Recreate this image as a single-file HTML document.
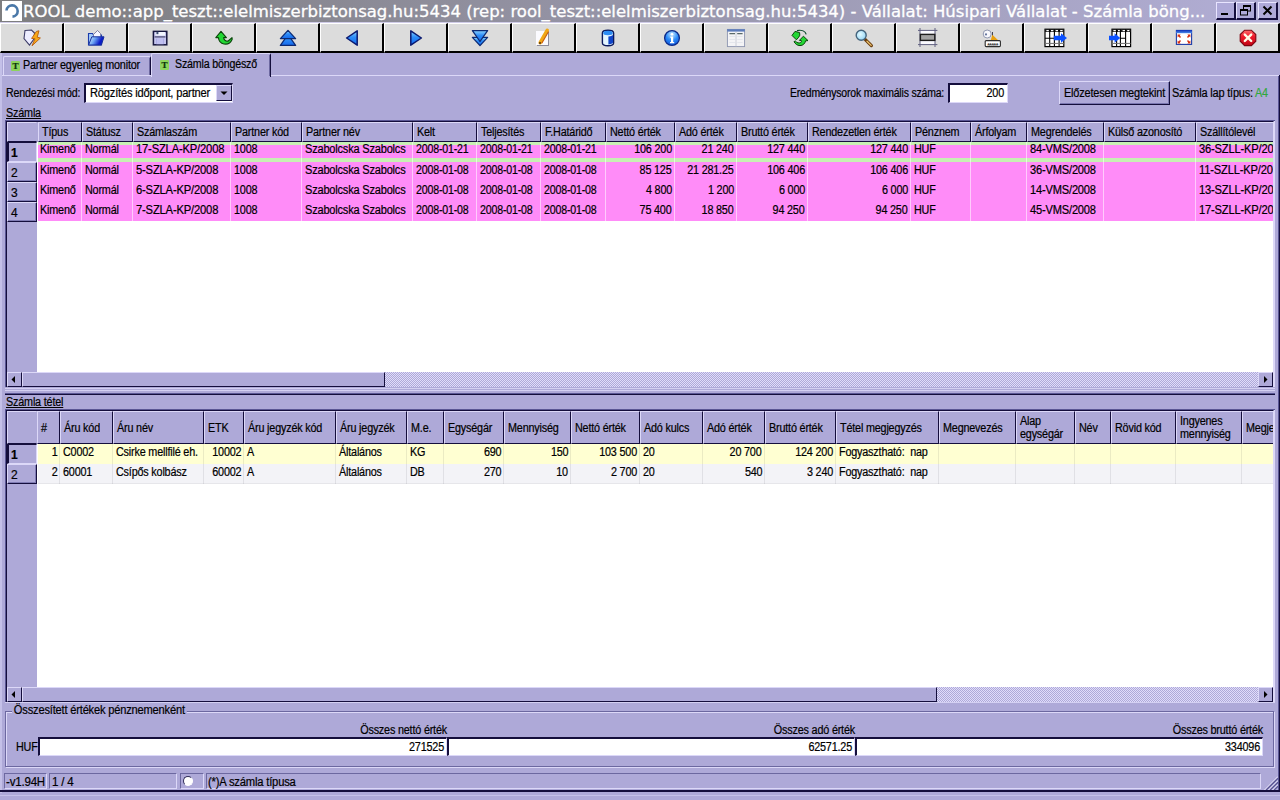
<!DOCTYPE html>
<html lang="hu"><head><meta charset="utf-8"><title>ROOL demo</title>
<style>
html,body{margin:0;padding:0}
body{width:1280px;height:800px;overflow:hidden;position:relative;background:#aea9d8;font:12px "Liberation Sans",sans-serif;color:#000;letter-spacing:-0.2px;-webkit-text-stroke:0.2px #000}
div,span{box-sizing:border-box}
.a{position:absolute}
.t{position:absolute;white-space:nowrap;line-height:13px;height:13px;transform:scaleX(.9);transform-origin:0 0}
.t.r{text-align:right;transform-origin:100% 0}
.x{display:inline-block;transform:scaleX(.9);transform-origin:0 0}
.ra .x{transform-origin:100% 0}
#cap{left:0;top:0;width:1280px;height:22px;background:linear-gradient(90deg,#7e7e80 0%,#84848a 15%,#b2aed6 100%)}
#ttl{-webkit-text-stroke:0.3px #fff;left:23px;top:1px;height:22px;letter-spacing:0;color:#fff;font:16.5px/22px "DejaVu Sans","Liberation Sans",sans-serif;white-space:nowrap;transform:scaleX(.9987);transform-origin:0 50%}
.cb{top:2px;width:20px;height:18px;background:#aea9d8;border-top:1px solid #e8e4ff;border-left:1px solid #e8e4ff;border-right:2px solid #140e3c;border-bottom:2px solid #140e3c}
.tb{top:23px;width:64px;height:30px;background:#dcdcdc;border-top:1px solid #fff;border-left:1px solid #fff;border-right:2px solid #000;border-bottom:2px solid #000}
.tb svg{position:absolute;left:21px;top:4px;width:20px;height:20px;overflow:visible}
.hc{position:absolute;background:#aea9d8;border-top:1px solid #dcd8f8;border-left:1px solid #dcd8f8;border-right:1px solid #140e3c;border-bottom:1px solid #140e3c}
.hc span{position:absolute;left:3px;white-space:nowrap;line-height:13px;transform:scaleX(.9);transform-origin:0 0}
.rh{position:absolute;left:7px;width:30px;height:20px;background:#aea9d8;border-top:1px solid #dcd8f8;border-left:1px solid #dcd8f8;border-right:1px solid #140e3c;border-bottom:1px solid #140e3c;box-shadow:inset -1px -1px 0 #807cb4}
.rh span{position:absolute;left:3px;top:4px;line-height:13px;font-size:12px}
.c{z-index:2;position:absolute;height:20px;white-space:nowrap;overflow:hidden;line-height:13px;padding:2px 2px 0 3px;border-right:1px solid rgba(255,255,255,.55)}
.sunk{border-top:2px solid #140e3c;border-left:2px solid #140e3c;border-right:1px solid #dcd8f8;border-bottom:1px solid #dcd8f8;background:#fff}
.sb{position:absolute;height:15px;background:#aea9d8}
.sbtn{position:absolute;top:0;width:15px;height:15px;background:#aea9d8;border-top:1px solid #dcd8f8;border-left:1px solid #dcd8f8;border-right:1px solid #140e3c;border-bottom:1px solid #140e3c}
.trk{position:absolute;top:0;height:15px;background:conic-gradient(#e0dcfa 25%,#aea9d8 0 50%,#e0dcfa 0 75%,#aea9d8 0) 0 0/2px 2px}
.sp{position:absolute;top:773px;height:16px;border-top:1px solid #6c68a0;border-left:1px solid #6c68a0;border-right:1px solid #dcd8f8;border-bottom:1px solid #dcd8f8}
</style></head><body>

<svg width="0" height="0" style="position:absolute"><defs>
<linearGradient id="gblue" x1="0" y1="0" x2="0" y2="1"><stop offset="0" stop-color="#8cd4ff"/><stop offset="0.45" stop-color="#2c8cf8"/><stop offset="1" stop-color="#1468ec"/></linearGradient>
<linearGradient id="gfold" x1="0" y1="0" x2="1" y2="0.3"><stop offset="0" stop-color="#e4f6ff"/><stop offset="0.45" stop-color="#6ca4f4"/><stop offset="0.85" stop-color="#0c1cc8"/></linearGradient>
<radialGradient id="ginfo" cx="0.5" cy="0.25" r="0.8"><stop offset="0" stop-color="#c4e8ff"/><stop offset="0.5" stop-color="#2c8cf8"/><stop offset="1" stop-color="#0c50d8"/></radialGradient>
<radialGradient id="glens" cx="0.4" cy="0.4" r="0.7"><stop offset="0" stop-color="#e4fbff"/><stop offset="1" stop-color="#8cd0f4"/></radialGradient>
<linearGradient id="gwin" x1="0" y1="0" x2="0" y2="1"><stop offset="0" stop-color="#0c2cb4"/><stop offset="1" stop-color="#4c8cec"/></linearGradient>
<linearGradient id="gred" x1="0" y1="0" x2="0" y2="1"><stop offset="0" stop-color="#ff6c6c"/><stop offset="0.4" stop-color="#f01c2c"/><stop offset="1" stop-color="#c00414"/></linearGradient>
</defs></svg>
<div class="a" id="cap"></div>
<div class="a" style="left:2px;top:1px;width:20px;height:20px;background:#fff"><svg width="20" height="20" viewBox="0 0 20 20"><path d="M4.5 9.5 A5.6 5.6 0 1 1 10.5 15.6" fill="none" stroke="#4a78a8" stroke-width="2.6"/></svg></div>
<div class="a" id="ttl">ROOL demo::app_teszt::elelmiszerbiztonsag.hu:5434 (rep: rool_teszt::elelmiszerbiztonsag.hu:5434) - Vállalat: Húsipari Vállalat - Számla böng...</div>
<div class="a cb" style="left:1216px"><svg class="a" style="left:0;top:0" width="17" height="15"><rect x="4" y="10" width="7" height="2" fill="#000"/></svg></div>
<div class="a cb" style="left:1236px"><svg class="a" style="left:0;top:0" width="17" height="15"><rect x="6.5" y="3" width="7" height="5" fill="none" stroke="#000"/><rect x="6" y="2" width="8" height="2" fill="#000"/><rect x="3.5" y="7" width="7" height="5" fill="#aea9d8" stroke="#000"/><rect x="3" y="6" width="8" height="2" fill="#000"/></svg></div>
<div class="a cb" style="left:1258px"><svg class="a" style="left:0;top:0" width="17" height="15"><path d="M4.5 3.5 L12.5 11.5 M12.5 3.5 L4.5 11.5" stroke="#000" stroke-width="2" fill="none"/></svg></div>
<div class="a" style="left:0;top:22px;width:1280px;height:1px;background:#d0cce8"></div>
<div class="a tb" style="left:0px"><svg viewBox="-10 -10 20 20"><polygon points="-7,-7.5 -0.5,-8 2.5,-5 2,1 -2.5,7 -8,0.5" fill="#ececff" stroke="#3c3c68" stroke-width="1.1"/><polygon points="7,-7.2 4.4,-6.6 -0.4,0.4 3,0.8 0,7.8 8.4,0 5.2,-0.8" fill="#f8a818" stroke="#b85c0c" stroke-width="0.9" stroke-linejoin="round"/></svg></div>
<div class="a tb" style="left:64px"><svg viewBox="-10 -10 20 20"><polygon points="-7.5,-4.5 -3.5,-4.5 -2.5,-3 5.5,-3 5.5,7 -7.5,7" fill="#a4ccfa" stroke="#1c3cac" stroke-width="1.1"/><polygon points="-2.5,-3.5 1.5,-7.5 4.5,-4.5 4.8,0 -2.5,0" fill="#f6f6ff" stroke="#5a5a88" stroke-width="0.7"/><polygon points="-7.4,7 -4.2,-1.2 8,-1.2 5.4,7" fill="url(#gfold)" stroke="#16309c" stroke-width="1"/></svg></div>
<div class="a tb" style="left:128px"><svg viewBox="-10 -10 20 20"><rect x="-6.6" y="-6.6" width="13.4" height="13.4" fill="#c4c4ee" stroke="#16163e" stroke-width="1.5"/><rect x="-4.5" y="-6" width="9.5" height="3.6" fill="#f2f6ff"/><rect x="-3.6" y="-6.2" width="2" height="2.4" fill="#3c4c74"/><rect x="-5.5" y="-1.8" width="11" height="1.4" fill="#585880"/><rect x="-4" y="0.6" width="8" height="5.6" fill="#aeaee6"/><path d="M-2,0.6V6.2M0,0.6V6.2M2,0.6V6.2" stroke="#d8d8ff" stroke-width="0.8"/></svg></div>
<div class="a tb" style="left:192px"><svg viewBox="-10 -10 20 20"><path d="M-3,-6.6 L2.4,-0.4 L-0.4,-0.4 C0,2.2 2,3.6 4.2,3 L8,-0.4 L8.2,1.2 C6.6,5 3.4,6.6 0,6 C-3.2,5.4 -5.2,3 -5.6,-0.4 L-8.2,-0.4 Z" fill="#22d834" stroke="#0a460a" stroke-width="1.1" stroke-linejoin="round"/></svg></div>
<div class="a tb" style="left:256px"><svg viewBox="-10 -10 20 20"><polygon points="0,-3.5 7.6,7.4 -7.6,7.4" fill="url(#gblue)" stroke="#0c2a74" stroke-width="1.3" stroke-linejoin="round"/><polygon points="0,-7.6 7.6,0.6 -7.6,0.6" fill="url(#gblue)" stroke="#0c2a74" stroke-width="1.3" stroke-linejoin="round"/></svg></div>
<div class="a tb" style="left:320px"><svg viewBox="-10 -10 20 20"><polygon points="-5.4,0 5.2,-7.2 5.2,7.2" fill="url(#gblue)" stroke="#0c1a70" stroke-width="1.5" stroke-linejoin="round"/></svg></div>
<div class="a tb" style="left:384px"><svg viewBox="-10 -10 20 20"><polygon points="5.4,0 -5.2,-7.2 -5.2,7.2" fill="url(#gblue)" stroke="#0c1a70" stroke-width="1.5" stroke-linejoin="round"/></svg></div>
<div class="a tb" style="left:448px"><svg viewBox="-10 -10 20 20"><polygon points="0,7.6 7.6,-0.6 -7.6,-0.6" fill="url(#gblue)" stroke="#0c2a74" stroke-width="1.3" stroke-linejoin="round"/><polygon points="0,3.5 7.6,-7.4 -7.6,-7.4" fill="url(#gblue)" stroke="#0c2a74" stroke-width="1.3" stroke-linejoin="round"/></svg></div>
<div class="a tb" style="left:512px"><svg viewBox="-10 -10 20 20"><rect x="-7" y="-6" width="12" height="14" fill="#8c8c9c"/><rect x="-8" y="-7" width="12" height="14" fill="#fbfbff"/><path d="M-3.8,4.6 L3.2,-7.6" stroke="#f0a818" stroke-width="3.6" stroke-linecap="round"/><path d="M-2.2,5.2 L4.6,-6.6" stroke="#c85c10" stroke-width="1.1"/><circle cx="-4" cy="5" r="1.1" fill="#5a3a10"/></svg></div>
<div class="a tb" style="left:576px"><svg viewBox="-10 -10 20 20"><path d="M-5.6,-5 C-5.6,-8.6 5.6,-8.6 5.6,-5 V5 C5.6,8.6 -5.6,8.6 -5.6,5 Z" fill="#e4f6ff" stroke="#0c1a5c" stroke-width="1.4"/><path d="M0.4,-1.6 C3,-1.8 5,-2.6 5,-3.6 V4.6 C5,5.8 2.6,6.4 0.4,6.4 Z" fill="#1044c8"/><ellipse cx="0" cy="-5" rx="4.8" ry="2.2" fill="#2c8cf4"/></svg></div>
<div class="a tb" style="left:640px"><svg viewBox="-10 -10 20 20"><circle cx="0" cy="0" r="7.4" fill="url(#ginfo)" stroke="#0c2a88" stroke-width="1.3"/><circle cx="0" cy="-3.8" r="1.3" fill="#fff"/><path d="M-1.8,-1.4 H1.2 V4 H2.2 V5.2 H-2 V4 H-1 V-0.2 H-1.8 Z" fill="#fff"/></svg></div>
<div class="a tb" style="left:704px"><svg viewBox="-10 -10 20 20"><rect x="-8.6" y="-8.6" width="17.2" height="17.2" fill="#f4f4f6" stroke="#8c94b0" stroke-width="0.9"/><rect x="-8.8" y="-8.8" width="17.6" height="2.4" fill="#5c7cbc"/><path d="M0,-6 V8.4" stroke="#c0c4d0" stroke-width="0.8"/><path d="M-6.6,-4.4 H-1 M1.2,-4.4 H6.6" stroke="#5a6a6a" stroke-width="1.1"/><path d="M-6.6,-1.5 H-1 M1.2,-1.5 H6.6 M-6.6,1.5 H-1 M1.2,1.5 H6.6 M-6.6,4.5 H-1 M1.2,4.5 H6.6" stroke="#e0e2ea" stroke-width="0.8"/></svg></div>
<div class="a tb" style="left:768px"><svg viewBox="-10 -10 20 20"><path d="M-3,-7.4 C2,-8.4 5.4,-6.4 6.2,-3.6" fill="none" stroke="#0c4a2c" stroke-width="1.2"/><path d="M-8,-2.6 L-5,-6.6 L-0.4,-5.4 L-0.2,-2.8 L-1.4,-0.6 L-3.6,1.8 Z" fill="#22d834" stroke="#0a460a" stroke-width="1" stroke-linejoin="round"/><path d="M3.4,-1.8 L8,2.6 L5.6,2.8 C5,5.6 3,7.6 0,7.6 C-3,7.6 -5,5.6 -6,3.6 L-4.6,3 C-3,5 -1,5.4 0.6,4.6 C1.4,4 1.6,3.2 1.4,2.6 L-0.6,2.4 Z" fill="#22d834" stroke="#0a460a" stroke-width="1" stroke-linejoin="round"/></svg></div>
<div class="a tb" style="left:832px"><svg viewBox="-10 -10 20 20"><path d="M1.6,1.8 L7.4,7.6" stroke="#6a3c0c" stroke-width="3.2" stroke-linecap="round"/><path d="M3,3.2 L7.2,7.4" stroke="#ecc470" stroke-width="1.3" stroke-linecap="round"/><circle cx="-2.8" cy="-2.7" r="5" fill="url(#glens)" stroke="#44647c" stroke-width="1.4"/></svg></div>
<div class="a tb" style="left:896px"><svg viewBox="-10 -10 20 20"><rect x="-8" y="-7.6" width="15" height="14.2" fill="#fafaff"/><path d="M-8,-10 V9 M7,-10 V9 M-10,-7.6 H9.4 M-10,6.6 H9.4" stroke="#606080" stroke-width="1"/><rect x="-7.6" y="-3.6" width="14.4" height="6" fill="#a2a2a2" stroke="#1c1c1c" stroke-width="1.4"/></svg></div>
<div class="a tb" style="left:960px"><svg viewBox="-10 -10 20 20"><circle cx="-4.8" cy="-4" r="4" fill="#f8f8fc" stroke="#9098b0" stroke-width="1"/><circle cx="-6" cy="-3.6" r="1.1" fill="#6878a0"/><path d="M0.5,-6 V-2" stroke="#303040" stroke-width="0.9"/><polygon points="-1.4,2.4 6.4,2.4 0.4,-3.2" fill="#e8a010"/><rect x="-6.8" y="2.6" width="15.2" height="6" rx="1" fill="#fff" stroke="#2c2c2c" stroke-width="1.1"/><text x="-5.6" y="9.6" font-family="Liberation Mono,monospace" font-size="7" font-weight="bold" textLength="12.6" fill="#404040">*****</text></svg></div>
<div class="a tb" style="left:1024px"><svg viewBox="-10 -10 20 20"><rect x="-11" y="-8.8" width="18.8" height="17.4" fill="#fff" stroke="#000" stroke-width="1.2"/><rect x="-11" y="-8.8" width="18.8" height="2.8" fill="#1c1c1c"/><path d="M-9.6,-7.4 H-7.2 M-5,-7.4 H-2.6 M-0.4,-7.4 H2 M4.2,-7.4 H6.6" stroke="#fff" stroke-width="1.3"/><path d="M-6.3,-8.8 V8.6 M-1.6,-8.8 V8.6 M3.1,-8.8 V8.6 M-11,0.2 H7.8" stroke="#000" stroke-width="1.1"/><path d="M-11,5.4 H7.8" stroke="#707070" stroke-width="1"/><polygon points="-2.2,-2.2 5,-2.2 5,-4.8 11,0 5,4.8 5,2.2 -2.2,2.2" fill="#0a50ff"/></svg></div>
<div class="a tb" style="left:1088px"><svg viewBox="-10 -10 20 20"><rect x="-8" y="-8.8" width="18.6" height="17.4" fill="#fff" stroke="#000" stroke-width="1.2"/><rect x="-8" y="-8.8" width="18.6" height="2.8" fill="#1c1c1c"/><path d="M-6.6,-7.4 H-4.2 M-2,-7.4 H0.4 M2.6,-7.4 H5 M7.2,-7.4 H9.4" stroke="#fff" stroke-width="1.3"/><path d="M-3.4,-8.8 V8.6 M0.4,-8.8 V8.6 M5.6,-8.8 V8.6 M0.4,0.2 H5.6" stroke="#000" stroke-width="1.1"/><path d="M-8,5.4 H10.6" stroke="#707070" stroke-width="1"/><polygon points="-11,-2.2 -5.4,-2.2 -5.4,-4.8 0.2,0 -5.4,4.8 -5.4,2.2 -11,2.2" fill="#0a50ff"/></svg></div>
<div class="a tb" style="left:1152px"><svg viewBox="-10 -10 20 20"><rect x="-7.6" y="-7.6" width="15.2" height="14" fill="#fff" stroke="#1c3ca8" stroke-width="1.1"/><rect x="-8" y="-8" width="16" height="3.2" fill="url(#gwin)"/><path d="M-6.4,-3.6 L-3.4,-3.4 L-4.2,-2.4 L-3,-1 L-4,0 L-5.4,-1.4 L-6.4,-0.6 Z M6.4,-3.6 L3.4,-3.4 L4.2,-2.4 L3,-1 L4,0 L5.4,-1.4 L6.4,-0.6 Z M-6.4,5.6 L-3.4,5.4 L-4.2,4.4 L-3,3 L-4,2 L-5.4,3.4 L-6.4,2.6 Z M6.4,5.6 L3.4,5.4 L4.2,4.4 L3,3 L4,2 L5.4,3.4 L6.4,2.6 Z" fill="#d83010"/></svg></div>
<div class="a tb" style="left:1216px"><svg viewBox="-10 -10 20 20"><polygon points="-3.4,-7.8 3.4,-7.8 7.8,-3.4 7.8,3.2 3.4,7.6 -3.4,7.6 -7.8,3.2 -7.8,-3.4" fill="url(#gred)" stroke="#7c0410" stroke-width="1.1"/><path d="M-3.2,-3.4 L3.2,3 M3.2,-3.4 L-3.2,3" stroke="#fffbe8" stroke-width="2.4" stroke-linecap="round"/></svg>
</div>
<div class="a" style="left:2px;top:75px;width:1277px;height:1px;background:#dcd8f8"></div>
<div class="a" style="left:0;top:53px;width:2px;height:740px;background:#c4c0e8"></div>
<div class="a" style="left:1279px;top:75px;width:1px;height:716px;background:#140e3c"></div>
<div class="a" style="left:1278px;top:76px;width:1px;height:714px;background:#5a5694"></div>
<div class="a" style="left:3px;top:56px;width:148px;height:19px;border-top:1px solid #dcd8f8;border-left:1px solid #dcd8f8;border-right:1px solid #140e3c;border-radius:2px 2px 0 0"></div>
<div class="a" style="left:149px;top:58px;width:1px;height:17px;background:#6c68a0"></div>
<div class="a" style="left:151px;top:53px;width:120px;height:24px;background:#aea9d8;border-top:1px solid #dcd8f8;border-left:1px solid #dcd8f8;border-right:1px solid #140e3c;border-radius:2px 2px 0 0"></div>
<div class="a" style="left:269px;top:55px;width:1px;height:21px;background:#6c68a0"></div>
<div class="a" style="left:11px;top:61px;width:9px;height:10px;background:#8cd45c;border-radius:1px;font:bold 9px/10px 'Liberation Serif',serif;text-align:center;color:#0a3c0a">T</div>
<div class="a" style="left:160px;top:60px;width:9px;height:10px;background:#8cd45c;border-radius:1px;font:bold 9px/10px 'Liberation Serif',serif;text-align:center;color:#0a3c0a">T</div>
<span class="t" id="tab1" style="left:23px;top:59px">Partner egyenleg monitor</span>
<span class="t" id="tab2" style="transform:scaleX(0.887);left:175px;top:58px">Számla böngésző</span>
<span class="t" id="l_rend" style="transform:scaleX(0.885);left:6px;top:87px">Rendezési mód:</span>
<div class="a sunk" style="left:84px;top:83px;width:149px;height:20px"></div>
<span class="t" id="l_combo" style="transform:scaleX(0.925);left:90px;top:87px">Rögzítés időpont, partner</span>
<div class="a" style="left:216px;top:85px;width:16px;height:16px;background:#aea9d8;border-top:1px solid #dcd8f8;border-left:1px solid #dcd8f8;border-right:1px solid #140e3c;border-bottom:1px solid #140e3c"><svg class="a" style="left:0;top:0" width="14" height="14"><path d="M3.5 5.5 L10.5 5.5 L7 9 Z" fill="#000"/></svg></div>
<span class="t" id="l_ered" style="transform:scaleX(0.872);left:790px;top:87px">Eredménysorok maximális száma:</span>
<div class="a sunk" style="left:948px;top:83px;width:60px;height:20px"></div>
<span class="t r" id="l_200" style="left:960px;width:44px;top:87px">200</span>
<div class="a" style="left:1059px;top:81px;width:111px;height:24px;background:#aea9d8;border-top:1px solid #dcd8f8;border-left:1px solid #dcd8f8;border-right:1px solid #140e3c;border-bottom:1px solid #140e3c;box-shadow:inset -1px -1px 0 #7a76b0"></div>
<span class="t" id="l_btn" style="transform:scaleX(0.912);left:1064px;top:87px">Előzetesen megtekint</span>
<span class="t" id="l_lap" style="transform:scaleX(0.913);left:1172px;top:87px">Számla lap típus:</span>
<span class="t" id="l_a4" style="-webkit-text-stroke:0.2px #2fa83c;left:1255px;top:87px;color:#2fa83c">A4</span>
<span class="t" id="g1_lbl" style="left:6px;top:107px;text-decoration:underline">Számla</span>
<div class="a" style="left:5px;top:120px;width:1270px;height:267px;border-top:2px solid #140e3c;border-left:2px solid #140e3c;border-right:2px solid #dcd8f8;background:#fff"></div>
<div class="a" style="left:5px;top:120px;width:1px;height:267px;background:#5a5694"></div><div class="a" style="left:5px;top:120px;width:1270px;height:1px;background:#5a5694"></div>
<div class="a" style="left:7px;top:122px;width:30px;height:250px;background:#aea9d8"></div>
<div class="a" style="left:7px;top:122px;width:1266px;height:20px;background:#aea9d8"></div>
<div class="hc" style="left:7px;top:122px;width:30px;height:20px;border-right-color:#aea9d8"></div>
<div class="hc" id="g1_h0" style="left:38px;top:122px;width:44px;height:20px;"><span style="top:3px">Típus</span></div>
<div class="hc" id="g1_h1" style="left:82px;top:122px;width:51px;height:20px;"><span style="top:3px">Státusz</span></div>
<div class="hc" id="g1_h2" style="left:133px;top:122px;width:98px;height:20px;"><span style="top:3px">Számlaszám</span></div>
<div class="hc" id="g1_h3" style="left:231px;top:122px;width:71px;height:20px;"><span style="top:3px">Partner kód</span></div>
<div class="hc" id="g1_h4" style="left:302px;top:122px;width:111px;height:20px;"><span style="top:3px">Partner név</span></div>
<div class="hc" id="g1_h5" style="left:413px;top:122px;width:64px;height:20px;"><span style="top:3px">Kelt</span></div>
<div class="hc" id="g1_h6" style="left:477px;top:122px;width:64px;height:20px;"><span style="top:3px">Teljesítés</span></div>
<div class="hc" id="g1_h7" style="left:541px;top:122px;width:65px;height:20px;"><span style="top:3px">F.Határidő</span></div>
<div class="hc" id="g1_h8" style="left:606px;top:122px;width:69px;height:20px;"><span style="top:3px">Nettó érték</span></div>
<div class="hc" id="g1_h9" style="left:675px;top:122px;width:62px;height:20px;"><span style="top:3px">Adó érték</span></div>
<div class="hc" id="g1_h10" style="left:737px;top:122px;width:71px;height:20px;"><span style="top:3px">Bruttó érték</span></div>
<div class="hc" id="g1_h11" style="left:808px;top:122px;width:103px;height:20px;"><span style="top:3px">Rendezetlen érték</span></div>
<div class="hc" id="g1_h12" style="left:911px;top:122px;width:60px;height:20px;"><span style="top:3px">Pénznem</span></div>
<div class="hc" id="g1_h13" style="left:971px;top:122px;width:56px;height:20px;"><span style="top:3px">Árfolyam</span></div>
<div class="hc" id="g1_h14" style="left:1027px;top:122px;width:77px;height:20px;"><span style="top:3px">Megrendelés</span></div>
<div class="hc" id="g1_h15" style="left:1104px;top:122px;width:92px;height:20px;"><span style="top:3px">Külső azonosító</span></div>
<div class="hc" id="g1_h16" style="left:1196px;top:122px;width:77px;height:20px;border-right:none;overflow:hidden;"><span style="top:3px">Szállítólevél</span></div>
<div class="rh" style="top:142px;border-left:2px solid #140e3c;border-top:1px solid #140e3c;border-right:1px solid #dcd8f8;border-bottom:1px solid #dcd8f8;box-shadow:none"><span style="font-weight:bold;left:2px">1</span></div>
<div class="a" style="left:38px;top:142px;width:1235px;height:20px;background:#ff8cf8"></div>
<div class="c" style="left:38px;top:142px;width:44px;padding-left:2px;padding-top:1px;"><span class="x" id="g1_r0c0">Kimenő</span></div>
<div class="c" style="left:82px;top:142px;width:51px;padding-top:1px;"><span class="x" id="g1_r0c1">Normál</span></div>
<div class="c" style="left:133px;top:142px;width:98px;padding-top:1px;"><span class="x" id="g1_r0c2" style="transform:scaleX(0.935)">17-SZLA-KP/2008</span></div>
<div class="c" style="left:231px;top:142px;width:71px;padding-top:1px;"><span class="x" id="g1_r0c3">1008</span></div>
<div class="c" style="left:302px;top:142px;width:111px;padding-top:1px;"><span class="x" id="g1_r0c4" style="transform:scaleX(0.917)">Szabolcska Szabolcs</span></div>
<div class="c" style="left:413px;top:142px;width:64px;padding-top:1px;"><span class="x" id="g1_r0c5" style="transform:scaleX(0.885)">2008-01-21</span></div>
<div class="c" style="left:477px;top:142px;width:64px;padding-top:1px;"><span class="x" id="g1_r0c6" style="transform:scaleX(0.885)">2008-01-21</span></div>
<div class="c" style="left:541px;top:142px;width:65px;padding-top:1px;"><span class="x" id="g1_r0c7" style="transform:scaleX(0.885)">2008-01-21</span></div>
<div class="c ra" style="left:606px;top:142px;width:69px;text-align:right;padding-top:1px;"><span class="x" id="g1_r0c8">106 200</span></div>
<div class="c ra" style="left:675px;top:142px;width:62px;text-align:right;padding-top:1px;"><span class="x" id="g1_r0c9">21 240</span></div>
<div class="c ra" style="left:737px;top:142px;width:71px;text-align:right;padding-top:1px;"><span class="x" id="g1_r0c10">127 440</span></div>
<div class="c ra" style="left:808px;top:142px;width:103px;text-align:right;padding-top:1px;"><span class="x" id="g1_r0c11">127 440</span></div>
<div class="c" style="left:911px;top:142px;width:60px;padding-top:1px;"><span class="x" id="g1_r0c12">HUF</span></div>
<div class="c" style="left:971px;top:142px;width:56px;padding-top:1px;"><span class="x" id="g1_r0c13"></span></div>
<div class="c" style="left:1027px;top:142px;width:77px;padding-top:1px;"><span class="x" id="g1_r0c14" style="transform:scaleX(0.925)">84-VMS/2008</span></div>
<div class="c" style="left:1104px;top:142px;width:92px;padding-top:1px;"><span class="x" id="g1_r0c15"></span></div>
<div class="c" style="left:1196px;top:142px;width:77px;border-right:none;padding-top:1px;"><span class="x" id="g1_r0c16" style="transform:scaleX(0.93)">36-SZLL-KP/2008</span></div>
<div class="rh" style="top:162px"><span>2</span></div>
<div class="a" style="left:38px;top:162px;width:1235px;height:20px;background:#ff8cf8"></div>
<div class="c" style="left:38px;top:162px;width:44px;padding-left:2px;"><span class="x" id="g1_r1c0">Kimenő</span></div>
<div class="c" style="left:82px;top:162px;width:51px;"><span class="x" id="g1_r1c1">Normál</span></div>
<div class="c" style="left:133px;top:162px;width:98px;"><span class="x" id="g1_r1c2" style="transform:scaleX(0.935)">5-SZLA-KP/2008</span></div>
<div class="c" style="left:231px;top:162px;width:71px;"><span class="x" id="g1_r1c3">1008</span></div>
<div class="c" style="left:302px;top:162px;width:111px;"><span class="x" id="g1_r1c4" style="transform:scaleX(0.917)">Szabolcska Szabolcs</span></div>
<div class="c" style="left:413px;top:162px;width:64px;"><span class="x" id="g1_r1c5" style="transform:scaleX(0.885)">2008-01-08</span></div>
<div class="c" style="left:477px;top:162px;width:64px;"><span class="x" id="g1_r1c6" style="transform:scaleX(0.885)">2008-01-08</span></div>
<div class="c" style="left:541px;top:162px;width:65px;"><span class="x" id="g1_r1c7" style="transform:scaleX(0.885)">2008-01-08</span></div>
<div class="c ra" style="left:606px;top:162px;width:69px;text-align:right;"><span class="x" id="g1_r1c8">85 125</span></div>
<div class="c ra" style="left:675px;top:162px;width:62px;text-align:right;"><span class="x" id="g1_r1c9">21 281.25</span></div>
<div class="c ra" style="left:737px;top:162px;width:71px;text-align:right;"><span class="x" id="g1_r1c10">106 406</span></div>
<div class="c ra" style="left:808px;top:162px;width:103px;text-align:right;"><span class="x" id="g1_r1c11">106 406</span></div>
<div class="c" style="left:911px;top:162px;width:60px;"><span class="x" id="g1_r1c12">HUF</span></div>
<div class="c" style="left:971px;top:162px;width:56px;"><span class="x" id="g1_r1c13"></span></div>
<div class="c" style="left:1027px;top:162px;width:77px;"><span class="x" id="g1_r1c14" style="transform:scaleX(0.925)">36-VMS/2008</span></div>
<div class="c" style="left:1104px;top:162px;width:92px;"><span class="x" id="g1_r1c15"></span></div>
<div class="c" style="left:1196px;top:162px;width:77px;border-right:none;"><span class="x" id="g1_r1c16" style="transform:scaleX(0.93)">11-SZLL-KP/2008</span></div>
<div class="rh" style="top:182px"><span>3</span></div>
<div class="a" style="left:38px;top:182px;width:1235px;height:20px;background:#ff8cf8"></div>
<div class="c" style="left:38px;top:182px;width:44px;padding-left:2px;"><span class="x" id="g1_r2c0">Kimenő</span></div>
<div class="c" style="left:82px;top:182px;width:51px;"><span class="x" id="g1_r2c1">Normál</span></div>
<div class="c" style="left:133px;top:182px;width:98px;"><span class="x" id="g1_r2c2" style="transform:scaleX(0.935)">6-SZLA-KP/2008</span></div>
<div class="c" style="left:231px;top:182px;width:71px;"><span class="x" id="g1_r2c3">1008</span></div>
<div class="c" style="left:302px;top:182px;width:111px;"><span class="x" id="g1_r2c4" style="transform:scaleX(0.917)">Szabolcska Szabolcs</span></div>
<div class="c" style="left:413px;top:182px;width:64px;"><span class="x" id="g1_r2c5" style="transform:scaleX(0.885)">2008-01-08</span></div>
<div class="c" style="left:477px;top:182px;width:64px;"><span class="x" id="g1_r2c6" style="transform:scaleX(0.885)">2008-01-08</span></div>
<div class="c" style="left:541px;top:182px;width:65px;"><span class="x" id="g1_r2c7" style="transform:scaleX(0.885)">2008-01-08</span></div>
<div class="c ra" style="left:606px;top:182px;width:69px;text-align:right;"><span class="x" id="g1_r2c8">4 800</span></div>
<div class="c ra" style="left:675px;top:182px;width:62px;text-align:right;"><span class="x" id="g1_r2c9">1 200</span></div>
<div class="c ra" style="left:737px;top:182px;width:71px;text-align:right;"><span class="x" id="g1_r2c10">6 000</span></div>
<div class="c ra" style="left:808px;top:182px;width:103px;text-align:right;"><span class="x" id="g1_r2c11">6 000</span></div>
<div class="c" style="left:911px;top:182px;width:60px;"><span class="x" id="g1_r2c12">HUF</span></div>
<div class="c" style="left:971px;top:182px;width:56px;"><span class="x" id="g1_r2c13"></span></div>
<div class="c" style="left:1027px;top:182px;width:77px;"><span class="x" id="g1_r2c14" style="transform:scaleX(0.925)">14-VMS/2008</span></div>
<div class="c" style="left:1104px;top:182px;width:92px;"><span class="x" id="g1_r2c15"></span></div>
<div class="c" style="left:1196px;top:182px;width:77px;border-right:none;"><span class="x" id="g1_r2c16" style="transform:scaleX(0.93)">13-SZLL-KP/2008</span></div>
<div class="rh" style="top:202px"><span>4</span></div>
<div class="a" style="left:38px;top:202px;width:1235px;height:20px;background:#ff8cf8"></div>
<div class="c" style="left:38px;top:202px;width:44px;padding-left:2px;"><span class="x" id="g1_r3c0">Kimenő</span></div>
<div class="c" style="left:82px;top:202px;width:51px;"><span class="x" id="g1_r3c1">Normál</span></div>
<div class="c" style="left:133px;top:202px;width:98px;"><span class="x" id="g1_r3c2" style="transform:scaleX(0.935)">7-SZLA-KP/2008</span></div>
<div class="c" style="left:231px;top:202px;width:71px;"><span class="x" id="g1_r3c3">1008</span></div>
<div class="c" style="left:302px;top:202px;width:111px;"><span class="x" id="g1_r3c4" style="transform:scaleX(0.917)">Szabolcska Szabolcs</span></div>
<div class="c" style="left:413px;top:202px;width:64px;"><span class="x" id="g1_r3c5" style="transform:scaleX(0.885)">2008-01-08</span></div>
<div class="c" style="left:477px;top:202px;width:64px;"><span class="x" id="g1_r3c6" style="transform:scaleX(0.885)">2008-01-08</span></div>
<div class="c" style="left:541px;top:202px;width:65px;"><span class="x" id="g1_r3c7" style="transform:scaleX(0.885)">2008-01-08</span></div>
<div class="c ra" style="left:606px;top:202px;width:69px;text-align:right;"><span class="x" id="g1_r3c8">75 400</span></div>
<div class="c ra" style="left:675px;top:202px;width:62px;text-align:right;"><span class="x" id="g1_r3c9">18 850</span></div>
<div class="c ra" style="left:737px;top:202px;width:71px;text-align:right;"><span class="x" id="g1_r3c10">94 250</span></div>
<div class="c ra" style="left:808px;top:202px;width:103px;text-align:right;"><span class="x" id="g1_r3c11">94 250</span></div>
<div class="c" style="left:911px;top:202px;width:60px;"><span class="x" id="g1_r3c12">HUF</span></div>
<div class="c" style="left:971px;top:202px;width:56px;"><span class="x" id="g1_r3c13"></span></div>
<div class="c" style="left:1027px;top:202px;width:77px;"><span class="x" id="g1_r3c14" style="transform:scaleX(0.925)">45-VMS/2008</span></div>
<div class="c" style="left:1104px;top:202px;width:92px;"><span class="x" id="g1_r3c15"></span></div>
<div class="c" style="left:1196px;top:202px;width:77px;border-right:none;"><span class="x" id="g1_r3c16" style="transform:scaleX(0.93)">17-SZLL-KP/2008</span></div>
<div class="sb" style="left:7px;top:372px;width:1266px">
<div class="trk" style="left:378px;width:873px"></div>
<div class="sbtn" style="left:0"><svg class="a" style="left:0;top:0" width="13" height="13"><path d="M7 3 L7 10 L3.5 6.5 Z" fill="#000"/></svg></div>
<div class="sbtn" style="left:15px;width:363px"></div>
<div class="sbtn" style="left:1251px"><svg class="a" style="left:0;top:0" width="13" height="13"><path d="M5 3 L5 10 L8.5 6.5 Z" fill="#000"/></svg></div>
</div>
<div class="a" style="left:38px;top:142px;width:1235px;height:3px;background:#c8f0b4"></div>
<div class="a" style="left:38px;top:158px;width:1235px;height:4px;background:#c8f0b4"></div>
<div class="a" style="left:38px;top:221px;width:1235px;height:1px;background:#fff"></div>
<div class="a" style="left:5px;top:388px;width:1270px;height:1px;background:#d4d0f2"></div><div class="a" style="left:5px;top:390px;width:1270px;height:1px;background:#d4d0f2"></div>
<div class="a" style="left:5px;top:393px;width:1270px;height:1px;background:#5a5694"></div><div class="a" style="left:5px;top:394px;width:1270px;height:1px;background:#140e3c"></div>
<span class="t" id="g2_lbl" style="left:6px;top:396px;text-decoration:underline">Számla tétel</span>
<div class="a" style="left:5px;top:409px;width:1270px;height:293px;border-top:2px solid #140e3c;border-left:2px solid #140e3c;border-right:2px solid #dcd8f8;background:#fff"></div>
<div class="a" style="left:5px;top:409px;width:1px;height:293px;background:#5a5694"></div><div class="a" style="left:5px;top:409px;width:1270px;height:1px;background:#5a5694"></div>
<div class="a" style="left:7px;top:411px;width:30px;height:276px;background:#aea9d8"></div>
<div class="a" style="left:7px;top:411px;width:1266px;height:33px;background:#aea9d8"></div>
<div class="hc" style="left:7px;top:411px;width:30px;height:33px;border-right-color:#aea9d8"></div>
<div class="hc" id="g2_h0" style="left:37px;top:411px;width:23px;height:33px;"><span style="top:10px">#</span></div>
<div class="hc" id="g2_h1" style="left:60px;top:411px;width:53px;height:33px;"><span style="top:10px">Áru kód</span></div>
<div class="hc" id="g2_h2" style="left:113px;top:411px;width:91px;height:33px;"><span style="top:10px">Áru név</span></div>
<div class="hc" id="g2_h3" style="left:204px;top:411px;width:40px;height:33px;"><span style="top:10px">ETK</span></div>
<div class="hc" id="g2_h4" style="left:244px;top:411px;width:92px;height:33px;"><span style="top:10px">Áru jegyzék kód</span></div>
<div class="hc" id="g2_h5" style="left:336px;top:411px;width:71px;height:33px;"><span style="top:10px">Áru jegyzék</span></div>
<div class="hc" id="g2_h6" style="left:407px;top:411px;width:37px;height:33px;"><span style="top:10px">M.e.</span></div>
<div class="hc" id="g2_h7" style="left:444px;top:411px;width:60px;height:33px;"><span style="top:10px">Egységár</span></div>
<div class="hc" id="g2_h8" style="left:504px;top:411px;width:67px;height:33px;"><span style="top:10px">Mennyiség</span></div>
<div class="hc" id="g2_h9" style="left:571px;top:411px;width:69px;height:33px;"><span style="top:10px">Nettó érték</span></div>
<div class="hc" id="g2_h10" style="left:640px;top:411px;width:63px;height:33px;"><span style="top:10px">Adó kulcs</span></div>
<div class="hc" id="g2_h11" style="left:703px;top:411px;width:62px;height:33px;"><span style="top:10px">Adó érték</span></div>
<div class="hc" id="g2_h12" style="left:765px;top:411px;width:71px;height:33px;"><span style="top:10px">Bruttó érték</span></div>
<div class="hc" id="g2_h13" style="left:836px;top:411px;width:103px;height:33px;"><span style="top:10px">Tétel megjegyzés</span></div>
<div class="hc" id="g2_h14" style="left:939px;top:411px;width:77px;height:33px;"><span style="top:10px">Megnevezés</span></div>
<div class="hc" id="g2_h15" style="left:1016px;top:411px;width:59px;height:33px;"><span style="top:3px">Alap</span><span style="top:16px">egységár</span></div>
<div class="hc" id="g2_h16" style="left:1075px;top:411px;width:36px;height:33px;"><span style="top:10px">Név</span></div>
<div class="hc" id="g2_h17" style="left:1111px;top:411px;width:65px;height:33px;"><span style="top:10px">Rövid kód</span></div>
<div class="hc" id="g2_h18" style="left:1176px;top:411px;width:66px;height:33px;"><span style="top:3px">Ingyenes</span><span style="top:16px">mennyiség</span></div>
<div class="hc" id="g2_h19" style="left:1242px;top:411px;width:31px;height:33px;border-right:none;overflow:hidden;"><span style="top:10px">Megjegyzés</span></div>
<div class="rh" style="top:444px;border-left:2px solid #140e3c;border-top:1px solid #140e3c;border-right:1px solid #dcd8f8;border-bottom:1px solid #dcd8f8;box-shadow:none"><span style="font-weight:bold;left:2px">1</span></div>
<div class="a" style="left:38px;top:444px;width:1235px;height:20px;background:#ffffd2"></div>
<div class="c ra" style="left:37px;top:444px;width:23px;text-align:right;border-right-color:rgba(0,0,20,.08);"><span class="x" id="g2_r0c0">1</span></div>
<div class="c" style="left:60px;top:444px;width:53px;border-right-color:rgba(0,0,20,.08);"><span class="x" id="g2_r0c1">C0002</span></div>
<div class="c" style="left:113px;top:444px;width:91px;border-right-color:rgba(0,0,20,.08);"><span class="x" id="g2_r0c2">Csirke mellfilé eh.</span></div>
<div class="c ra" style="left:204px;top:444px;width:40px;text-align:right;border-right-color:rgba(0,0,20,.08);"><span class="x" id="g2_r0c3">10002</span></div>
<div class="c" style="left:244px;top:444px;width:92px;border-right-color:rgba(0,0,20,.08);"><span class="x" id="g2_r0c4">A</span></div>
<div class="c" style="left:336px;top:444px;width:71px;border-right-color:rgba(0,0,20,.08);"><span class="x" id="g2_r0c5">Általános</span></div>
<div class="c" style="left:407px;top:444px;width:37px;border-right-color:rgba(0,0,20,.08);"><span class="x" id="g2_r0c6">KG</span></div>
<div class="c ra" style="left:444px;top:444px;width:60px;text-align:right;border-right-color:rgba(0,0,20,.08);"><span class="x" id="g2_r0c7">690</span></div>
<div class="c ra" style="left:504px;top:444px;width:67px;text-align:right;border-right-color:rgba(0,0,20,.08);"><span class="x" id="g2_r0c8">150</span></div>
<div class="c ra" style="left:571px;top:444px;width:69px;text-align:right;border-right-color:rgba(0,0,20,.08);"><span class="x" id="g2_r0c9">103 500</span></div>
<div class="c" style="left:640px;top:444px;width:63px;border-right-color:rgba(0,0,20,.08);"><span class="x" id="g2_r0c10">20</span></div>
<div class="c ra" style="left:703px;top:444px;width:62px;text-align:right;border-right-color:rgba(0,0,20,.08);"><span class="x" id="g2_r0c11">20 700</span></div>
<div class="c ra" style="left:765px;top:444px;width:71px;text-align:right;border-right-color:rgba(0,0,20,.08);"><span class="x" id="g2_r0c12">124 200</span></div>
<div class="c" style="left:836px;top:444px;width:103px;border-right-color:rgba(0,0,20,.08);"><span class="x" id="g2_r0c13">Fogyasztható:&nbsp; nap</span></div>
<div class="c" style="left:939px;top:444px;width:77px;border-right-color:rgba(0,0,20,.08);"><span class="x" id="g2_r0c14"></span></div>
<div class="c" style="left:1016px;top:444px;width:59px;border-right-color:rgba(0,0,20,.08);"><span class="x" id="g2_r0c15"></span></div>
<div class="c" style="left:1075px;top:444px;width:36px;border-right-color:rgba(0,0,20,.08);"><span class="x" id="g2_r0c16"></span></div>
<div class="c" style="left:1111px;top:444px;width:65px;border-right-color:rgba(0,0,20,.08);"><span class="x" id="g2_r0c17"></span></div>
<div class="c" style="left:1176px;top:444px;width:66px;border-right-color:rgba(0,0,20,.08);"><span class="x" id="g2_r0c18"></span></div>
<div class="c" style="left:1242px;top:444px;width:31px;border-right:none;border-right-color:rgba(0,0,20,.08);"><span class="x" id="g2_r0c19"></span></div>
<div class="rh" style="top:464px"><span>2</span></div>
<div class="a" style="left:38px;top:464px;width:1235px;height:20px;background:#f3f3f7"></div>
<div class="c ra" style="left:37px;top:464px;width:23px;text-align:right;border-right-color:rgba(0,0,20,.08);"><span class="x" id="g2_r1c0">2</span></div>
<div class="c" style="left:60px;top:464px;width:53px;border-right-color:rgba(0,0,20,.08);"><span class="x" id="g2_r1c1">60001</span></div>
<div class="c" style="left:113px;top:464px;width:91px;border-right-color:rgba(0,0,20,.08);"><span class="x" id="g2_r1c2">Csípős kolbász</span></div>
<div class="c ra" style="left:204px;top:464px;width:40px;text-align:right;border-right-color:rgba(0,0,20,.08);"><span class="x" id="g2_r1c3">60002</span></div>
<div class="c" style="left:244px;top:464px;width:92px;border-right-color:rgba(0,0,20,.08);"><span class="x" id="g2_r1c4">A</span></div>
<div class="c" style="left:336px;top:464px;width:71px;border-right-color:rgba(0,0,20,.08);"><span class="x" id="g2_r1c5">Általános</span></div>
<div class="c" style="left:407px;top:464px;width:37px;border-right-color:rgba(0,0,20,.08);"><span class="x" id="g2_r1c6">DB</span></div>
<div class="c ra" style="left:444px;top:464px;width:60px;text-align:right;border-right-color:rgba(0,0,20,.08);"><span class="x" id="g2_r1c7">270</span></div>
<div class="c ra" style="left:504px;top:464px;width:67px;text-align:right;border-right-color:rgba(0,0,20,.08);"><span class="x" id="g2_r1c8">10</span></div>
<div class="c ra" style="left:571px;top:464px;width:69px;text-align:right;border-right-color:rgba(0,0,20,.08);"><span class="x" id="g2_r1c9">2 700</span></div>
<div class="c" style="left:640px;top:464px;width:63px;border-right-color:rgba(0,0,20,.08);"><span class="x" id="g2_r1c10">20</span></div>
<div class="c ra" style="left:703px;top:464px;width:62px;text-align:right;border-right-color:rgba(0,0,20,.08);"><span class="x" id="g2_r1c11">540</span></div>
<div class="c ra" style="left:765px;top:464px;width:71px;text-align:right;border-right-color:rgba(0,0,20,.08);"><span class="x" id="g2_r1c12">3 240</span></div>
<div class="c" style="left:836px;top:464px;width:103px;border-right-color:rgba(0,0,20,.08);"><span class="x" id="g2_r1c13">Fogyasztható:&nbsp; nap</span></div>
<div class="c" style="left:939px;top:464px;width:77px;border-right-color:rgba(0,0,20,.08);"><span class="x" id="g2_r1c14"></span></div>
<div class="c" style="left:1016px;top:464px;width:59px;border-right-color:rgba(0,0,20,.08);"><span class="x" id="g2_r1c15"></span></div>
<div class="c" style="left:1075px;top:464px;width:36px;border-right-color:rgba(0,0,20,.08);"><span class="x" id="g2_r1c16"></span></div>
<div class="c" style="left:1111px;top:464px;width:65px;border-right-color:rgba(0,0,20,.08);"><span class="x" id="g2_r1c17"></span></div>
<div class="c" style="left:1176px;top:464px;width:66px;border-right-color:rgba(0,0,20,.08);"><span class="x" id="g2_r1c18"></span></div>
<div class="c" style="left:1242px;top:464px;width:31px;border-right:none;border-right-color:rgba(0,0,20,.08);"><span class="x" id="g2_r1c19"></span></div>
<div class="sb" style="left:7px;top:687px;width:1266px">
<div class="trk" style="left:930px;width:321px"></div>
<div class="sbtn" style="left:0"><svg class="a" style="left:0;top:0" width="13" height="13"><path d="M7 3 L7 10 L3.5 6.5 Z" fill="#000"/></svg></div>
<div class="sbtn" style="left:15px;width:915px"></div>
<div class="sbtn" style="left:1251px"><svg class="a" style="left:0;top:0" width="13" height="13"><path d="M5 3 L5 10 L8.5 6.5 Z" fill="#000"/></svg></div>
</div>
<div class="a" style="left:38px;top:483px;width:1235px;height:1px;background:#e6e6ea"></div>
<div class="a" style="left:5px;top:702px;width:1270px;height:1px;background:#d4d0f2"></div>
<div class="a" style="left:5px;top:711px;width:1269px;height:56px;border:1px solid #6c68a0;box-shadow:1px 1px 0 #dcd8f8, inset 1px 1px 0 #dcd8f8"></div>
<span class="t" id="gb_t" style="transform:scaleX(.925);left:12px;top:704px;background:#aea9d8;padding:0 2px">Összesített értékek pénznemenként</span>
<span class="t" id="huf" style="left:16px;top:741px">HUF</span>
<div class="a sunk" style="left:38px;top:737px;width:409px;height:19px"></div>
<span class="t r" id="sl0" style="left:247px;width:200px;top:724px">Összes nettó érték</span>
<span class="t r" id="sv0" style="left:244px;width:200px;top:741px">271525</span>
<div class="a sunk" style="left:447px;top:737px;width:408px;height:19px"></div>
<span class="t r" id="sl1" style="left:655px;width:200px;top:724px">Összes adó érték</span>
<span class="t r" id="sv1" style="left:652px;width:200px;top:741px">62571.25</span>
<div class="a sunk" style="left:855px;top:737px;width:408px;height:19px"></div>
<span class="t r" id="sl2" style="left:1063px;width:200px;top:724px">Összes bruttó érték</span>
<span class="t r" id="sv2" style="left:1060px;width:200px;top:741px">334096</span>
<div class="sp" style="left:4px;width:43px"></div>
<div class="sp" style="left:49px;width:128px"></div>
<div class="sp" style="left:180px;width:24px"></div>
<div class="sp" style="left:206px;width:1055px"></div>
<span class="t" id="st1" style="left:6px;top:776px;transform:scaleX(.96)">-v1.94H</span>
<span class="t" id="st2" style="left:52px;top:776px;transform:scaleX(.96)">1 / 4</span>
<div class="a" style="left:183px;top:776px;width:10px;height:10px;border-radius:5px;background:#fff;border-top:1px solid #302c58;border-left:1px solid #302c58;border-right:1px solid #fff;border-bottom:1px solid #fff"></div>
<span class="t" id="st4" style="left:208px;top:776px;transform:scaleX(.935)">(*)A számla típusa</span>
<div class="a" style="left:0;top:790px;width:1280px;height:2px;background:#140e3c"></div>
<div class="a" style="left:0;top:795px;width:1280px;height:1px;background:#c4c0e8"></div>
<svg class="a" style="left:1264px;top:776px" width="14" height="14"><path d="M14 2 L2 14 M14 6 L6 14 M14 10 L10 14" stroke="#5a5694" stroke-width="1.6"/><path d="M14 0.5 L0.5 14 M14 4.5 L4.5 14 M14 8.5 L8.5 14" stroke="#f0ecff" stroke-width="1"/></svg>
</body></html>
